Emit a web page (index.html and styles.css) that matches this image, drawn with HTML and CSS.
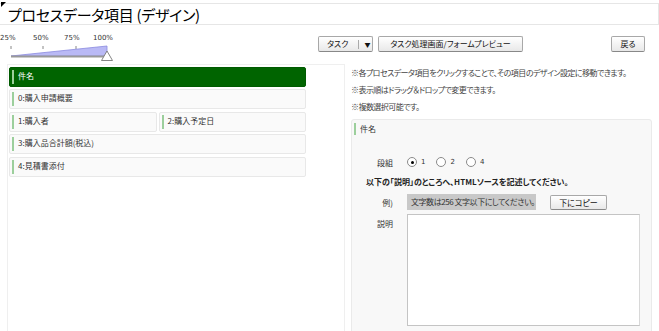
FILE: index.html
```html
<!DOCTYPE html>
<html lang="ja">
<head>
  <meta charset="UTF-8">
  <title>プロセスデータ項目 (デザイン)</title>
  <link rel="stylesheet" href="styles.css">
</head>
<body>

  <!-- Title -->
  <div class="title-bar">
    <span class="corner"></span>
    <h1>プロセスデータ項目 (デザイン)</h1>
  </div>

  <!-- Zoom slider + actions -->
  <div class="toolbar">
    <div class="zoom">
      <div class="zoom-labels">
        <span>25%</span>
        <span>50%</span>
        <span>75%</span>
        <span>100%</span>
      </div>
      <svg class="zoom-slider" width="120" height="20" viewBox="0 0 120 20">
        <line x1="11" y1="3" x2="11" y2="6" stroke="#888" />
        <line x1="43" y1="3" x2="43" y2="6" stroke="#888" />
        <line x1="76" y1="3" x2="76" y2="6" stroke="#888" />
        <polygon points="11,13 107,3 107,13" fill="#b9b9f5" stroke="#8a8ae0" stroke-width="0.8" />
        <line x1="11" y1="13.5" x2="107" y2="13.5" stroke="#999" stroke-width="2" />
        <polygon points="107,8 101.5,17.5 112.5,17.5" fill="#fff" stroke="#777" stroke-width="0.9" />
      </svg>
    </div>

    <div class="actions">
      <button class="btn split-btn">タスク<span class="caret">▼</span></button>
      <button class="btn">タスク処理画面/フォームプレビュー</button>
    </div>

    <button class="btn back-btn">戻る</button>
  </div>

  <div class="main">
    <!-- Process data items -->
    <div class="item-panel">
      <div class="item-list">
        <div class="item selected">件名</div>
        <div class="item">0:購入申請概要</div>
        <div class="item-row">
          <div class="item">1:購入者</div>
          <div class="item">2:購入予定日</div>
        </div>
        <div class="item">3:購入品合計額(税込)</div>
        <div class="item">4:見積書添付</div>
      </div>
    </div>

    <!-- Design settings -->
    <div class="design-panel">
      <p class="note">※各プロセスデータ項目をクリックすることで、その項目のデザイン設定に移動できます。</p>
      <p class="note">※表示順はドラッグ＆ドロップで変更できます。</p>
      <p class="note">※複数選択可能です。</p>

      <div class="design-box">
        <div class="design-head">件名</div>

        <div class="form-row columns-row">
          <span class="form-label">段組</span>
          <div class="radios">
            <span class="radio checked"></span><span class="radio-text">1</span>
            <span class="radio"></span><span class="radio-text">2</span>
            <span class="radio"></span><span class="radio-text">4</span>
          </div>
        </div>

        <p class="instruction">以下の「説明」のところへ、HTMLソースを記述してください。</p>

        <div class="form-row example-row">
          <span class="form-label">例)</span>
          <div class="example-box">文字数は256 文字以下にしてください。</div>
          <button class="btn copy-btn">下にコピー</button>
        </div>

        <div class="form-row desc-row">
          <span class="form-label">説明</span>
          <textarea class="desc-input"></textarea>
        </div>
      </div>
    </div>
  </div>

</body>
</html>
```

FILE: styles.css
```css
/* General Reset */
* {
  margin: 0;
  padding: 0;
  box-sizing: border-box;
}

body {
  font-family: "Noto Sans CJK JP", "Noto Sans", sans-serif;
  font-feature-settings: "palt";
  font-size: 8px;
  color: #333;
  background: #fff;
  width: 659px;
  height: 331px;
  overflow: hidden;
}

/* Title */
.title-bar {
  position: relative;
  margin-top: 3px;
  height: 22px;
  border: 1px solid #e6e6e6;
  border-left: none;
}

.title-bar h1 {
  font-size: 15px;
  font-weight: 400;
  color: #000;
  line-height: 21px;
  padding-left: 8px;
  letter-spacing: -0.3px;
}

.corner {
  position: absolute;
  left: 1px;
  top: -2px;
  width: 0;
  height: 0;
  border-top: 5px solid #000;
  border-right: 5px solid transparent;
}

/* Toolbar */
.toolbar {
  display: flex;
  align-items: flex-start;
  height: 39px;
}

.zoom {
  width: 120px;
  padding-top: 8px;
}

.zoom-labels {
  display: flex;
  font-family: "DejaVu Sans", sans-serif;
  font-size: 7px;
  color: #333;
  line-height: 10px;
}

.zoom-labels span:nth-child(1) { width: 33px; }
.zoom-labels span:nth-child(2) { width: 31px; }
.zoom-labels span:nth-child(3) { width: 29px; }

.zoom-slider {
  display: block;
}

.actions {
  display: flex;
  gap: 5px;
  margin-left: 198px;
  margin-top: 11px;
}

.btn {
  font-family: "Noto Sans CJK JP", sans-serif;
  font-feature-settings: "palt";
  font-size: 8px;
  color: #111;
  height: 16px;
  padding: 0 9px;
  background: linear-gradient(#ffffff, #e8e8e8);
  border: 1px solid #a8a8a8;
  border-bottom-color: #888;
  border-radius: 2px;
  line-height: 14px;
}

.split-btn {
  width: 55px;
  text-align: left;
  padding: 0 0 0 8px;
}

.caret {
  display: inline-block;
  font-size: 6px;
  margin-left: 10px;
  padding-left: 5px;
  border-left: 1px solid #aaa;
  line-height: 9px;
}

.actions .btn:nth-child(2) {
  width: 145px;
}

.back-btn {
  margin-left: auto;
  margin-right: 14px;
  margin-top: 11px;
  width: 34px;
  padding: 0;
}

/* Main area */
.main {
  display: flex;
  margin-left: 7px;
}

.item-panel {
  width: 338px;
  height: 270px;
  border: 1px solid #efefef;
  border-bottom: none;
  padding: 2px 0 0 1px;
}

.item-list {
  width: 297px;
  display: flex;
  flex-direction: column;
  gap: 2.4px;
}

.item-row {
  display: flex;
  gap: 2px;
}

.item-row .item {
  flex: 1;
}

.item {
  height: 20px;
  background: #fafafa;
  border: 1px solid #e8e8e8;
  border-radius: 2px;
  padding: 2px 0 0 2px;
  color: #333;
}

.item::before {
  content: "";
  display: inline-block;
  width: 2px;
  height: 14px;
  background: #9ccf9c;
  vertical-align: middle;
  margin-right: 4px;
}

.item.selected {
  background: #006400;
  border-color: #005a00;
  color: #fff;
}

.design-panel {
  flex: 1;
  padding-left: 6px;
}

.note {
  line-height: 17px;
  color: #444;
  white-space: nowrap;
  letter-spacing: -0.55px;
}

.design-box {
  margin-top: 4px;
  width: 301px;
  height: 220px;
  background: #f8f8f8;
  border: 1px solid #eaeaea;
  border-radius: 3px;
  padding: 3px 0 0 2px;
}

.design-head {
  border-left: 2px solid #9ccf9c;
  padding-left: 4px;
  line-height: 12px;
  color: #333;
}

.form-row {
  display: flex;
  align-items: center;
  padding-left: 12px;
}

.form-label {
  width: 27px;
  text-align: right;
  margin-right: 14px;
  color: #333;
}

.columns-row {
  margin-top: 21px;
  height: 12px;
}

.radios {
  display: flex;
  align-items: center;
}

.radio {
  position: relative;
  width: 10px;
  height: 10px;
  border: 1px solid #8a8a8a;
  border-radius: 50%;
  background: #fff;
}

.radio.checked::after {
  content: "";
  position: absolute;
  left: 2.5px;
  top: 2.5px;
  width: 3px;
  height: 3px;
  border-radius: 50%;
  background: #000;
}

.radio-text {
  font-family: "DejaVu Sans", sans-serif;
  font-size: 7px;
  margin: 0 11px 0 4px;
}

.instruction {
  margin-top: 8px;
  padding-left: 12px;
  font-weight: 700;
  color: #222;
  line-height: 12px;
}

.example-row {
  margin-top: 6px;
}

.example-box {
  width: 129px;
  height: 16px;
  background: #c8c8c8;
  padding-left: 4px;
  line-height: 16px;
  color: #333;
  white-space: nowrap;
  letter-spacing: -0.45px;
}

.copy-btn {
  margin-left: 14px;
  width: 57px;
  height: 15px;
  padding: 0;
}

.desc-row {
  margin-top: 4px;
  align-items: flex-start;
}

.desc-row .form-label {
  margin-top: 4px;
}

.desc-input {
  width: 233px;
  height: 112px;
  border: 1px solid #c4c4c4;
  border-right-color: #d8d8d8;
  background: #fff;
  resize: none;
}
```
